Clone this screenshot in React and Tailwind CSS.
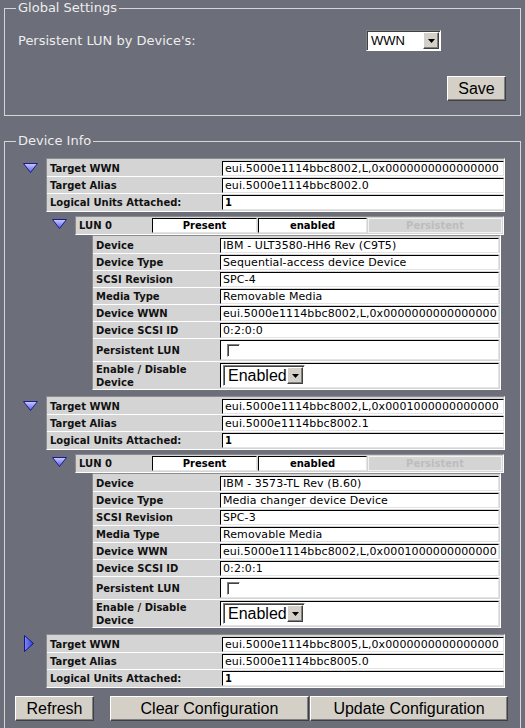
import React from "react";

const devices = [
  {
    wwn: "eui.5000e1114bbc8002,L,0x0000000000000000",
    alias: "eui.5000e1114bbc8002.0",
    units: "1",
    open: true,
    lun: {
      device: "IBM - ULT3580-HH6 Rev (C9T5)",
      type: "Sequential-access device Device",
      scsi: "SPC-4",
      media: "Removable Media",
      wwn: "eui.5000e1114bbc8002,L,0x0000000000000000",
      id: "0:2:0:0",
    },
  },
  {
    wwn: "eui.5000e1114bbc8002,L,0x0001000000000000",
    alias: "eui.5000e1114bbc8002.1",
    units: "1",
    open: true,
    lun: {
      device: "IBM - 3573-TL Rev (B.60)",
      type: "Media changer device Device",
      scsi: "SPC-3",
      media: "Removable Media",
      wwn: "eui.5000e1114bbc8002,L,0x0001000000000000",
      id: "0:2:0:1",
    },
  },
  {
    wwn: "eui.5000e1114bbc8005,L,0x0000000000000000",
    alias: "eui.5000e1114bbc8005.0",
    units: "1",
    open: false,
  },
];

const verdana = "font-['DejaVu_Sans',Verdana,sans-serif]";
const arial = "font-['Liberation_Sans',Arial,sans-serif]";

// classic windows 3d bevels
const raised =
  "border border-t-white border-l-white border-r-[#404040] border-b-[#404040] shadow-[inset_-1px_-1px_#808080] bg-[#d4d0c8]";
const sunken =
  "border border-t-[#808080] border-l-[#808080] border-r-white border-b-white shadow-[inset_1px_1px_#404040]";
const tableBox =
  "border border-t-[#8c8c8c] border-l-[#8c8c8c] border-r-white border-b-white bg-[#d4d4d4]";
const cellBox =
  "bg-white border border-t-black border-l-black border-r-[#e4e4e4] border-b-[#e4e4e4]";

const DownArrow = () => (
  <svg width="15" height="10" viewBox="0 0 15 10">
    <defs>
      <linearGradient id="dn" x1="0" y1="0" x2="0" y2="1">
        <stop offset="0" stopColor="#c8ccff" />
        <stop offset="1" stopColor="#5a5ee6" />
      </linearGradient>
    </defs>
    <polygon points="0.5,0.5 14.5,0.5 7.5,9.5" fill="url(#dn)" stroke="#1c1c8a" strokeWidth="1" />
  </svg>
);

const RightArrow = () => (
  <svg width="10" height="17" viewBox="0 0 10 17">
    <defs>
      <linearGradient id="rt" x1="0" y1="0" x2="1" y2="0">
        <stop offset="0" stopColor="#7e88f4" />
        <stop offset="1" stopColor="#2f3fcf" />
      </linearGradient>
    </defs>
    <polygon points="0.5,0.5 9.5,8.5 0.5,16.5" fill="url(#rt)" stroke="#16168a" strokeWidth="1" />
  </svg>
);

const SelectArrow = ({ className }) => (
  <div className={`${raised} flex items-center justify-center ${className}`}>
    <svg width="7" height="4" viewBox="0 0 7 4">
      <polygon points="0,0 7,0 3.5,4" fill="#000" />
    </svg>
  </div>
);

const Button = ({ children, className }) => (
  <button className={`${raised} ${arial} text-[16px] leading-none text-black h-[25px] ${className}`}>
    {children}
  </button>
);

const Row = ({ label, labelW, valueW, h = "h-[17px]", children, last }) => (
  <div className={`flex ${h} ${last ? "" : "border-b border-white"}`}>
    <div
      className={`${labelW} shrink-0 flex items-center pl-[3px] text-[10px] font-bold leading-[13px] text-[#111]`}
    >
      {label}
    </div>
    <div className="w-px shrink-0" />
    <div className={`${valueW} shrink-0 ${cellBox} my-auto ${h === "h-[17px]" ? "h-[15px]" : "h-[calc(100%-2px)]"} flex items-center`}>
      {children}
    </div>
  </div>
);

const Val = ({ children, bold }) => (
  <span className={`pl-[2px] leading-none text-black whitespace-nowrap ${bold ? "font-bold text-[10px]" : "text-[11px] tracking-[0.1px]"}`}>
    {children}
  </span>
);

const TargetTable = ({ d }) => (
  <div className={`${tableBox} w-[459px] pt-px`}>
    <Row label="Target WWN" labelW="w-[174px]" valueW="w-[282px]">
      <Val>{d.wwn}</Val>
    </Row>
    <Row label="Target Alias" labelW="w-[174px]" valueW="w-[282px]">
      <Val>{d.alias}</Val>
    </Row>
    <Row label="Logical Units Attached:" labelW="w-[174px]" valueW="w-[282px]" last>
      <Val bold>{d.units}</Val>
    </Row>
  </div>
);

const LunBar = () => (
  <div className={`${tableBox} w-[429px] h-[19px] flex items-center gap-px text-[10px] font-bold`}>
    <div className="w-[75px] pl-[3px] text-[#111]">LUN 0</div>
    <div className={`${cellBox} w-[105px] h-[15px] flex items-center justify-center`}>Present</div>
    <div className={`${cellBox} w-[109px] h-[15px] flex items-center justify-center`}>enabled</div>
    <div className="w-[134px] h-[15px] border border-[#f2f2f2] bg-[#d4d4d4] flex items-center justify-center text-[#bdbdbd]">
      Persistent
    </div>
  </div>
);

const DetailTable = ({ l }) => (
  <div className={`${tableBox} w-[409px] ml-[17px] pt-px`}>
    <Row label="Device" labelW="w-[126px]" valueW="w-[279px]"><Val>{l.device}</Val></Row>
    <Row label="Device Type" labelW="w-[126px]" valueW="w-[279px]"><Val>{l.type}</Val></Row>
    <Row label="SCSI Revision" labelW="w-[126px]" valueW="w-[279px]"><Val>{l.scsi}</Val></Row>
    <Row label="Media Type" labelW="w-[126px]" valueW="w-[279px]"><Val>{l.media}</Val></Row>
    <Row label="Device WWN" labelW="w-[126px]" valueW="w-[279px]"><Val>{l.wwn}</Val></Row>
    <Row label="Device SCSI ID" labelW="w-[126px]" valueW="w-[279px]"><Val>{l.id}</Val></Row>
    <Row label="Persistent LUN" labelW="w-[126px]" valueW="w-[279px]" h="h-[23px]">
      <div className={`ml-[6px] w-[13px] h-[13px] bg-white ${sunken}`} />
    </Row>
    <Row label={<span>Enable / Disable<br />Device</span>} labelW="w-[126px]" valueW="w-[279px]" h="h-[27px]" last>
      <div className={`ml-[2px] w-[82px] h-[21px] bg-white ${sunken} flex items-center justify-between`}>
        <span className={`${arial} text-[16px] leading-none pl-[4px] text-black`}>Enabled</span>
        <SelectArrow className="w-[16px] h-[17px] mr-px" />
      </div>
    </Row>
  </div>
);

const DeviceBlock = ({ d, className }) => (
  <div className={`flex ${className}`}>
    <div className={`w-[23px] shrink-0 ${d.open ? "pt-[5px]" : "pt-px pl-px"}`}>
      {d.open ? <DownArrow /> : <RightArrow />}
    </div>
    <div>
      <TargetTable d={d} />
      {d.open && (
        <div className="flex mt-[4px] ml-[6px]">
          <div className="w-[23px] shrink-0 pt-[3px]">
            <DownArrow />
          </div>
          <div>
            <LunBar />
            <DetailTable l={d.lun} />
          </div>
        </div>
      )}
    </div>
  </div>
);

export default function App() {
  return (
    <div className={`h-[728px] bg-[#6c6e7a] ${verdana} overflow-hidden`}>
      {/* GLOBAL SETTINGS */}
      <fieldset className="mx-[4px] border border-[#d6d6d6]">
        <legend className="ml-[11px] px-[2px] text-[13px] leading-[16px] text-[#ededed]">
          Global Settings
        </legend>
        <div className="flex items-center mt-[14px] pl-[13px]">
          <div className="w-[348px] text-[13px] text-[#ededed]">Persistent LUN by Device's:</div>
          <div className={`w-[75px] h-[21px] bg-white ${sunken} flex items-center justify-between`}>
            <span className={`${arial} text-[13px] leading-none pl-[4px] text-black`}>WWN</span>
            <SelectArrow className="w-[16px] h-[17px] mr-px" />
          </div>
        </div>
        <div className="flex justify-end mt-[25px] mr-[14px] mb-[14px]">
          <Button className="w-[59px]">Save</Button>
        </div>
      </fieldset>

      {/* DEVICE INFO */}
      <fieldset className="mx-[4px] mt-[17px] border border-[#d6d6d6] pb-[40px]">
        <legend className="ml-[11px] px-[2px] text-[13px] leading-[16px] text-[#ededed]">
          Device Info
        </legend>
        <div className="ml-[18px]">
          <DeviceBlock d={devices[0]} className="mt-[9px]" />
          <DeviceBlock d={devices[1]} className="mt-[6px]" />
          <DeviceBlock d={devices[2]} className="mt-[6px]" />
        </div>
        <div className="flex mt-[8px] ml-[10px]">
          <Button className="w-[79px]">Refresh</Button>
          <Button className="w-[199px] ml-[16px]">Clear Configuration</Button>
          <Button className="w-[198px] ml-[1px]">Update Configuration</Button>
        </div>
      </fieldset>
    </div>
  );
}
